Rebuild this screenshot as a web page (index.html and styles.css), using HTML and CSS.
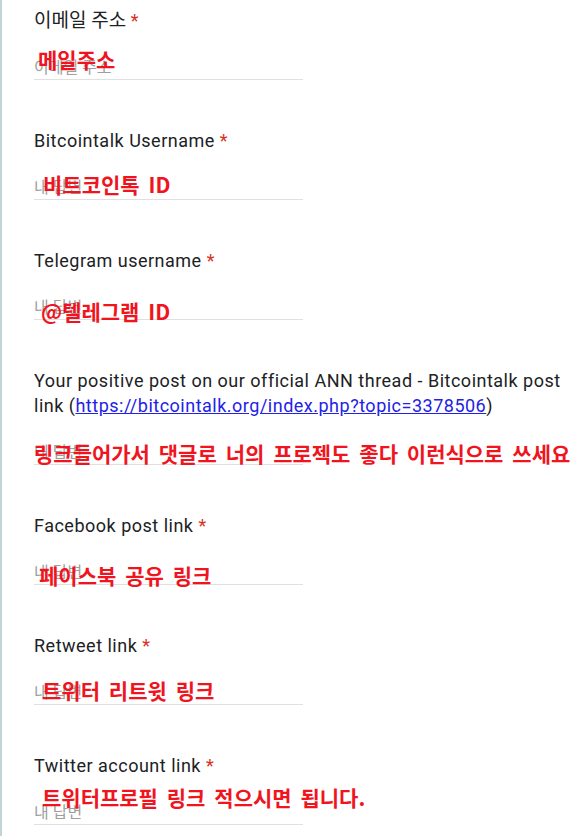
FILE: index.html
```html
<!DOCTYPE html>
<html lang="ko">
<head>
    <meta charset="UTF-8">
    <meta name="viewport" content="width=device-width, initial-scale=1.0">
    <title>Bitcointalk 바운티 신청</title>
    <link rel="stylesheet" href="styles.css">
</head>
<body>
    <div class="form">
        <div class="field">
            <div class="label label-ko">이메일 주소 <span class="req">*</span></div>
            <div class="answer">
                <div class="placeholder">이메일 주소</div>
                <div class="note note-email">메일주소</div>
            </div>
        </div>
        <div class="field">
            <div class="label">Bitcointalk Username <span class="req">*</span></div>
            <div class="answer">
                <div class="placeholder">내 답변</div>
                <div class="note note-btc">비트코인톡 ID</div>
            </div>
        </div>
        <div class="field">
            <div class="label">Telegram username <span class="req">*</span></div>
            <div class="answer">
                <div class="placeholder">내 답변</div>
                <div class="note note-tg">@텔레그램 ID</div>
            </div>
        </div>
        <div class="field">
            <div class="label">Your positive post on our official ANN thread - Bitcointalk post link (<a href="#">https://bitcointalk.org/index.php?topic=3378506</a>)</div>
            <div class="answer">
                <div class="placeholder">내 답변</div>
                <div class="note note-ann">링크들어가서 댓글로 너의 프로젝도 좋다 이런식으로 쓰세요</div>
            </div>
        </div>
        <div class="field">
            <div class="label">Facebook post link <span class="req">*</span></div>
            <div class="answer">
                <div class="placeholder">내 답변</div>
                <div class="note note-fb">페이스북 공유 링크</div>
            </div>
        </div>
        <div class="field">
            <div class="label">Retweet link <span class="req">*</span></div>
            <div class="answer">
                <div class="placeholder">내 답변</div>
                <div class="note note-rt">트위터 리트윗 링크</div>
            </div>
        </div>
        <div class="field">
            <div class="label">Twitter account link <span class="req">*</span></div>
            <div class="answer">
                <div class="placeholder">내 답변</div>
                <div class="note note-tw">트위터프로필 링크 적으시면 됩니다.</div>
            </div>
        </div>
    </div>
</body>
</html>
```
FILE: styles.css
```css
body {
    margin: 0;
    background-color: #fff;
    font-family: Roboto, 'Noto Sans CJK KR', sans-serif;
}
.form {
    border-left: 2px solid #c3d4d8;
    padding: 8px 0 0 32px;
    min-height: 836px;
    box-sizing: border-box;
}
.field {
    margin-bottom: 48px;
}
.label {
    font-size: 18px;
    letter-spacing: 0.5px;
    line-height: 25px;
    color: #202124;
    padding-right: 10px;
}
.label-ko {
    font-size: 19px;
    letter-spacing: 0;
}
.label-ko .req {
    font-size: 18px;
}
.label a {
    color: #2222e6;
}
.req {
    color: #d93025;
}
.answer {
    position: relative;
    width: 269px;
    margin-top: 24px;
    border-bottom: 1px solid #e0e0e0;
}
.placeholder {
    font-size: 16px;
    line-height: 22px;
    color: #9e9e9e;
}
.note {
    position: absolute;
    left: 0;
    font-family: 'Noto Sans CJK KR', sans-serif;
    font-weight: bold;
    font-size: 21px;
    line-height: 24px;
    word-spacing: 3px;
    color: #f0141e;
    white-space: nowrap;
}
.note-email { left: 4px; bottom: 8px; }
.note-btc { left: 9px; bottom: 3px; }
.note-tg { left: 7px; bottom: -4px; }
.note-ann { left: 0; bottom: -1px; }
.note-fb { left: 5px; bottom: -3px; }
.note-rt { left: 8px; bottom: 2px; }
.note-tw { left: 8px; bottom: 15px; }
```
